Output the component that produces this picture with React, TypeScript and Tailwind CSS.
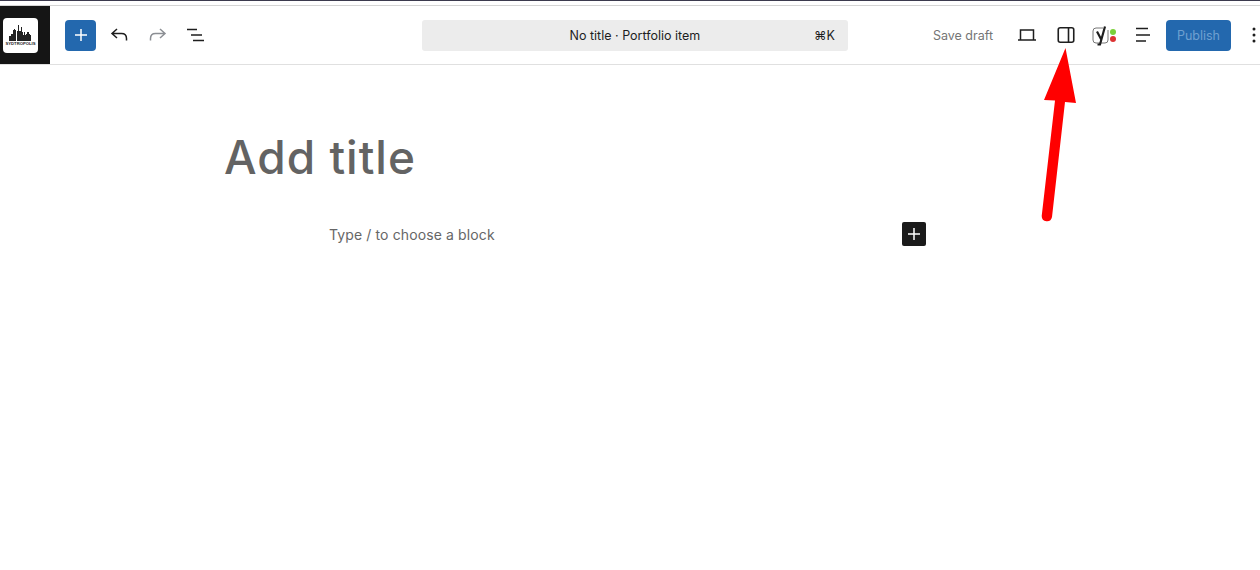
const sans = "font-['Inter','Liberation_Sans',sans-serif]";

function IconButton({ children, className = "" }: { children: React.ReactNode; className?: string }) {
  return <button className={`flex h-6 w-6 items-center justify-center ${className}`}>{children}</button>;
}

function Logo() {
  return (
    <div className="flex h-[58px] w-[50px] shrink-0 items-center bg-[#151515] pl-[3px]">
      <div className="flex h-[35px] w-[35px] flex-col items-center justify-center rounded-sm bg-white">
        <svg width="30" height="17" viewBox="0 0 30 17" fill="#222">
          <path d="M3 17v-5h2v-2h2V6h1V5h1v1h1v11h1V7h1V1h1v6h2V3h1v5h1v3h1V8h1v3h1v-1h1V8h2v2h1v1h1v6H3z" />
        </svg>
        <span className="text-[4.2px] leading-[6px] font-bold text-[#222] font-['Liberation_Sans',sans-serif]">SYDTROPOLIS</span>
      </div>
    </div>
  );
}

function LeftTools() {
  return (
    <div className="flex items-center">
      <button className="ml-[15px] flex h-[31px] w-[31px] items-center justify-center rounded-sm bg-[#2368ae]">
        <svg width="14" height="14" viewBox="0 0 14 14" stroke="#fff" strokeWidth="1.5"><path d="M7 1v12M1 7h12" /></svg>
      </button>
      <IconButton className="ml-[11px]">
        <svg width="24" height="24" viewBox="0 0 24 24" fill="none" stroke="#1e1e1e" strokeWidth="1.5"><path d="M10 6 5 10.500l5 4.500M5 10.500h9.500c3 0 5 2 5 5v2" /></svg>
      </IconButton>
      <IconButton className="ml-[14px]">
        <svg width="24" height="24" viewBox="0 0 24 24" fill="none" stroke="#8c8f94" strokeWidth="1.5"><path d="m15 6 5 4.500-5 4.500M20 10.500h-9.500c-3 0-5 2-5 5v2" /></svg>
      </IconButton>
      <IconButton className="ml-[14px]">
        <svg width="24" height="24" viewBox="0 0 24 24" fill="none" stroke="#1e1e1e" strokeWidth="1.500"><path d="M4 6.500h10M8 12h11M10 17.500h11" /></svg>
      </IconButton>
    </div>
  );
}

function CommandBar() {
  return (
    <div className={`relative flex h-[31px] w-[426px] items-center justify-center rounded-[3px] bg-[#ececec] pt-[2px] text-[12.500px] text-[#1e1e1e] ${sans}`}>
      <span>No title · Portfolio item</span>
      <span className="absolute right-[13px]">⌘K</span>
    </div>
  );
}

function YoastIcon() {
  return (
    <div className="relative h-6 w-6">
      <svg width="24" height="24" viewBox="0 0 24 24" fill="none">
        <path d="M11 5H4a3 3 0 0 0-3 3v9a3 3 0 0 0 3 3h9a3 3 0 0 0 3-3V7" stroke="#777" strokeWidth="1" />
        <path d="M5 8.500 9.500 17M13 3.500 8 21.500H5.500" stroke="#1e1e1e" strokeWidth="2.200" />
      </svg>
      <span className="absolute top-[5.500px] left-[18px] h-[6px] w-[6px] rounded-full bg-[#7ad03a]" />
      <span className="absolute top-[12.500px] left-[18px] h-[6px] w-[6px] rounded-full bg-[#dc3232]" />
    </div>
  );
}

function RightTools() {
  return (
    <div className={`mr-[-6px] flex items-center ${sans}`}>
      <span className="pt-[2px] text-[12.500px] text-[#757575]">Save draft</span>
      <IconButton className="ml-[22px]">
        <svg width="24" height="24" viewBox="0 0 24 24" fill="none" stroke="#1e1e1e" strokeWidth="1.500"><path d="M5.500 16.500V7h13v9.500M3 17h18" /></svg>
      </IconButton>
      <IconButton className="ml-[15px]">
        <svg width="24" height="24" viewBox="0 0 24 24" fill="none" stroke="#1e1e1e" strokeWidth="1.600"><rect x="4.250" y="4.750" width="15.500" height="14.500" rx="2" /><path d="M14.500 5v14" /></svg>
      </IconButton>
      <div className="ml-[14px]"><YoastIcon /></div>
      <IconButton className="ml-[15px]">
        <svg width="24" height="24" viewBox="0 0 24 24" fill="none" stroke="#1e1e1e" strokeWidth="1.500"><path d="M5 5.500h12M5 12h14M5 18h10" /></svg>
      </IconButton>
      <button className="ml-[11px] flex h-[31px] w-[65px] items-center justify-center rounded-sm bg-[#2368ae] pt-[2px] text-[12.500px] text-[#6fa0d0]">Publish</button>
      <IconButton className="ml-[11px]">
        <svg width="4" height="16" viewBox="0 0 4 16" fill="#1e1e1e"><circle cx="2" cy="2" r="1.500" /><circle cx="2" cy="8" r="1.500" /><circle cx="2" cy="14" r="1.500" /></svg>
      </IconButton>
    </div>
  );
}

function Header() {
  return (
    <header className="flex h-[59px] items-start justify-between border-b border-[#e0e0e0] bg-white">
      <div className="flex h-[58px] items-center">
        <Logo />
        <LeftTools />
      </div>
      <div className="flex h-[58px] items-center pl-[130px]">
        <CommandBar />
      </div>
      <div className="flex h-[58px] items-center">
        <RightTools />
      </div>
    </header>
  );
}

function RedArrow() {
  // tip just below the panel icon, tail ends around y=220
  return (
    <svg className="absolute top-[44px] left-[1036px]" width="48" height="182" viewBox="0 0 48 182" fill="none">
      <path d="M29.500 4 40 59 29 58 16 173a5.200 5.200 0 0 1-10.300-1L19 56.500 8 56Z" fill="#ff0000" />
    </svg>
  );
}

export default function App() {
  return (
    <div className="relative h-[570px] w-[1260px] overflow-hidden bg-white">
      <div className="h-[6px] border-t border-b border-t-[#3c3a4e] border-b-[#d5d5d5] bg-white" />
      <Header />
      <main className="flex flex-col">
        <h1 className={`mt-[62px] ml-[224px] text-[46px] leading-[60px] font-[450] tracking-[1px] text-[#636363] ${sans}`}>Add title</h1>
        <div className="mt-[35px] flex items-center pl-[329px]">
          <p className={`w-[573px] text-[14px] tracking-[0.12px] text-[#666] ${sans}`}>Type / to choose a block</p>
          <button className="flex h-6 w-6 items-center justify-center rounded-[2px] bg-[#1a1a1a]">
            <svg width="12" height="12" viewBox="0 0 12 12" stroke="#fff" strokeWidth="1.500"><path d="M6 0v12M0 6h12" /></svg>
          </button>
        </div>
      </main>
      <RedArrow />
    </div>
  );
}
